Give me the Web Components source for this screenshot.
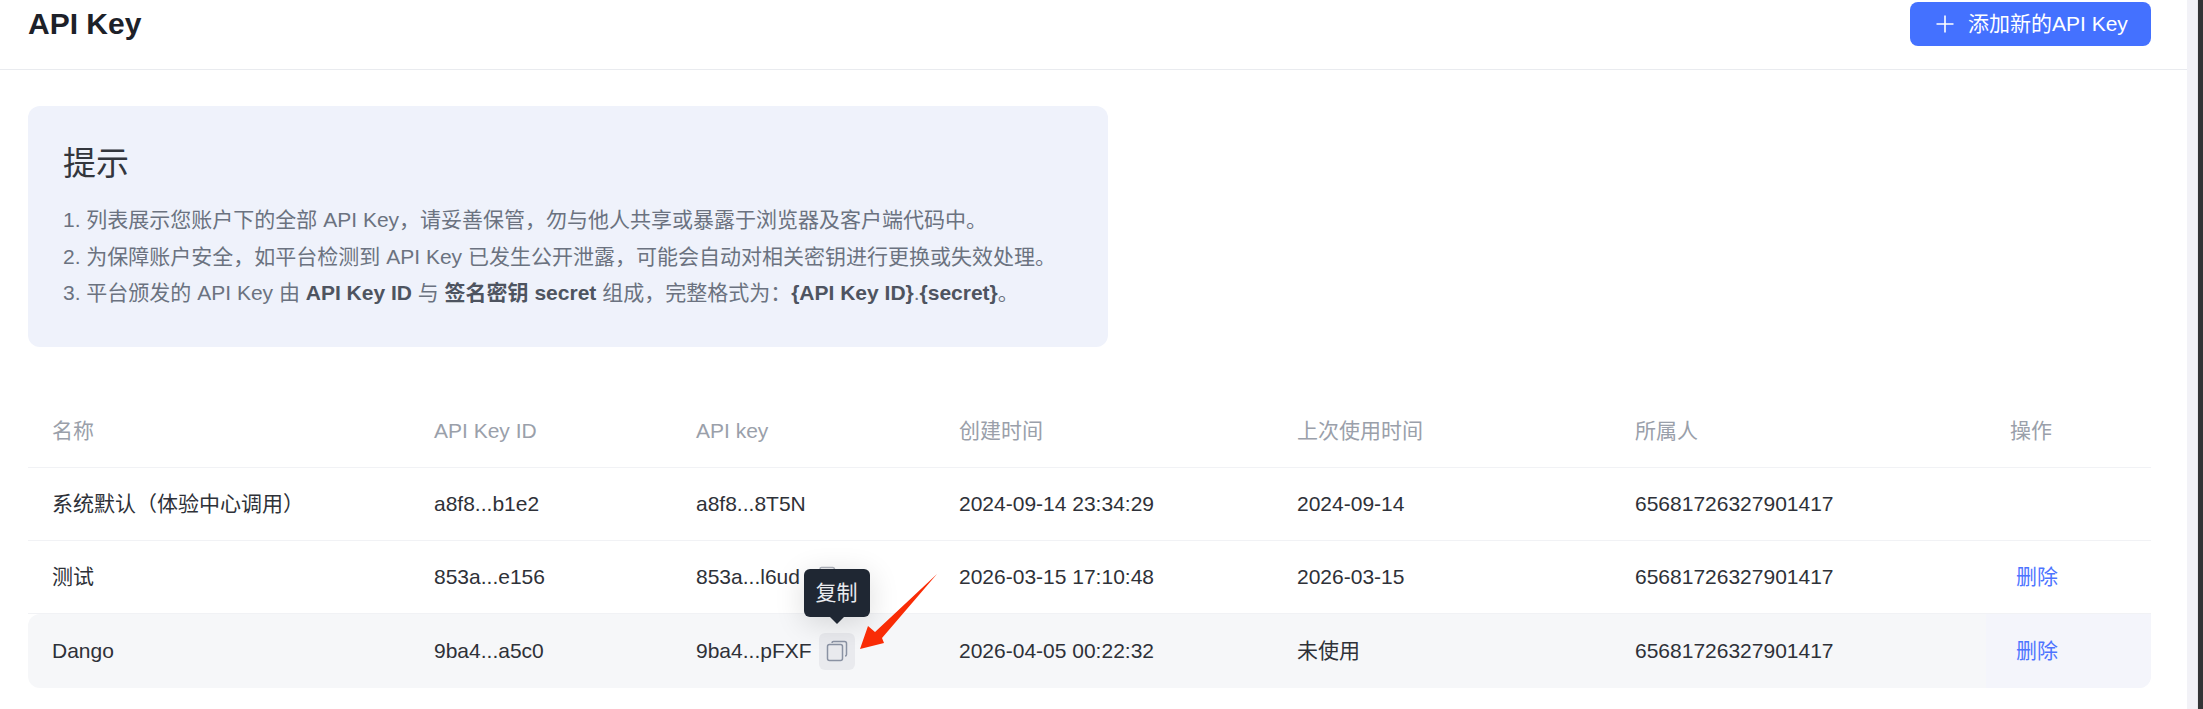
<!DOCTYPE html>
<html lang="zh">
<head>
<meta charset="utf-8">
<title>API Key</title>
<style>
  html, body { margin: 0; height: 100%; background: #fff; overflow: hidden; }
  body {
    display: flex;
    font-family: "Liberation Sans", "Noto Sans CJK SC", sans-serif;
  }
  tip-card b { color: #4e5460; }
</style>
</head>
<body>
<key-page>
  <page-header title-text="API Key" action="添加新的API Key"></page-header>
  <tip-card heading="提示">
    <li>列表展示您账户下的全部 API Key，请妥善保管，勿与他人共享或暴露于浏览器及客户端代码中。</li>
    <li>为保障账户安全，如平台检测到 API Key 已发生公开泄露，可能会自动对相关密钥进行更换或失效处理。</li>
    <li>平台颁发的 API Key 由 <b>API Key ID</b> 与 <b>签名密钥 secret</b> 组成，完整格式为：<b>{API Key ID}</b>.<b>{secret}</b>。</li>
  </tip-card>
  <key-table></key-table>
</key-page>
<window-edge></window-edge>

<script>
// Plain page column, takes whatever is left beside the scrollbar
class KeyPage extends HTMLElement {
  constructor() {
    super();
    this.attachShadow({ mode: 'open' });
    this.shadowRoot.innerHTML = `
      <style>
        :host { display: block; flex: 1; min-width: 0; }
      </style>
      <slot></slot>
    `;
  }
}

class PageHeader extends HTMLElement {
  constructor() {
    super();
    this.attachShadow({ mode: 'open' });
  }

  connectedCallback() {
    this.shadowRoot.innerHTML = `
      <style>
        :host {
          display: flex;
          align-items: flex-start;
          justify-content: space-between;
          height: 70px;
          padding: 2px 36px 0 28px;
          box-sizing: border-box;
          border-bottom: 1px solid #e9ebef;
        }
        h1 {
          margin: 0;
          font-size: 30px;
          line-height: 44px;
          font-weight: 700;
          color: #1d2129;
        }
        button {
          display: flex;
          align-items: center;
          gap: 14px;
          width: 241px;
          height: 44px;
          padding: 0 0 0 26px;
          box-sizing: border-box;
          border: 0;
          border-radius: 8px;
          background: #4471ff;
          color: #fff;
          font: 21px/28px "Liberation Sans", "Noto Sans CJK SC", sans-serif;
        }
        svg { width: 18px; height: 18px; flex: none; }
      </style>
      <h1>${this.getAttribute('title-text')}</h1>
      <button>
        <svg viewBox="0 0 18 18" fill="none" stroke="#fff" stroke-width="1.6"><path d="M9 0.5v17M0.5 9h17"/></svg>
        <span>${this.getAttribute('action')}</span>
      </button>
    `;
  }
}

class TipCard extends HTMLElement {
  constructor() {
    super();
    this.attachShadow({ mode: 'open' });
  }

  connectedCallback() {
    this.shadowRoot.innerHTML = `
      <style>
        :host {
          display: block;
          width: 1080px;
          height: 241px;
          margin: 36px 0 0 28px;
          padding: 38px 35px 0;
          box-sizing: border-box;
          border-radius: 12px;
          background: #eff2fb;
        }
        h2 {
          margin: 0 0 18px;
          font-size: 33px;
          line-height: 40px;
          font-weight: 400;
          color: #33363d;
        }
        ol {
          margin: 0;
          padding: 0;
        }
        ::slotted(li) {
          display: block;
          font-size: 21px;
          line-height: 36.5px;
          color: #6b7280;
          white-space: nowrap;
        }
      </style>
      <h2>${this.getAttribute('heading')}</h2>
      <ol><slot></slot></ol>
    `;
    // Numbers are written in since slotted li has no marker here
    [...this.children].forEach((li, i) => li.prepend(`${i + 1}. `));
  }
}

const COLUMNS = ['名称', 'API Key ID', 'API key', '创建时间', '上次使用时间', '所属人', '操作'];
const ROWS = [
  ['系统默认（体验中心调用）', 'a8f8...b1e2', 'a8f8...8T5N', '2024-09-14 23:34:29', '2024-09-14', '65681726327901417', ''],
  ['测试', '853a...e156', '853a...l6ud', '2026-03-15 17:10:48', '2026-03-15', '65681726327901417', '删除'],
  ['Dango', '9ba4...a5c0', '9ba4...pFXF', '2026-04-05 00:22:32', '未使用', '65681726327901417', '删除']
];

class KeyTable extends HTMLElement {
  constructor() {
    super();
    this.attachShadow({ mode: 'open' });
  }

  connectedCallback() {
    const head = COLUMNS.map(c => `<div class="cell">${c}</div>`).join('');
    const rows = ROWS.map((row, r) => `
      <div class="row ${r === 2 ? 'hover' : ''}">
        ${row.map((c, i) => `<div class="cell ${i === 6 ? 'link' : ''}">${c}${i === 2 && r > 0 ? this.copyButton(r === 2) : ''}</div>`).join('')}
      </div>`).join('');

    this.shadowRoot.innerHTML = `
      <style>
        :host {
          display: block;
          position: relative;
          width: 2123px;
          margin: 48px 0 0 28px;
          font-size: 21px;
          line-height: 28px;
          color: #2e3138;
        }
        .row {
          display: grid;
          grid-template-columns: 382px 262px 263px 338px 338px 375px 165px;
          align-items: center;
          height: 73px;
          border-bottom: 1px solid #f1f2f5;
          box-sizing: border-box;
        }
        .head { color: #9aa0aa; }
        .hover {
          height: 74px;
          background: #f6f7f9;
          border-radius: 12px 0 12px 12px;
          border-bottom: 0;
        }
        .cell { display: flex; align-items: center; gap: 7px; padding-left: 24px; white-space: nowrap; }
        .link { color: #4d74ff; padding-left: 30px; }
        .hover .link {
          align-self: stretch;
          background: #f4f5fb;
          border-radius: 0 0 12px 0;
        }
        .copy {
          display: flex;
          align-items: center;
          justify-content: center;
          width: 36px;
          height: 37px;
          border-radius: 6px;
          position: relative;
        }
        .copy.on { background: #e9eaee; }
        .copy svg { width: 22px; height: 22px; }
        .tooltip {
          position: absolute;
          left: -15px;
          bottom: 53px;
          width: 66px;
          height: 48px;
          display: flex;
          align-items: center;
          justify-content: center;
          border-radius: 6px;
          background: #1f2733;
          color: #e9ebef;
          font-size: 21px;
          box-shadow: 0 6px 30px rgba(0, 0, 0, .14);
        }
        .tooltip::after {
          content: '';
          position: absolute;
          left: 50%;
          bottom: -7px;
          margin-left: -7px;
          border: 7px solid transparent;
          border-bottom: 0;
          border-top-color: #1f2733;
        }
        .arrow {
          position: absolute;
          left: 832px;
          top: 175px;
          width: 80px;
          height: 82px;
          pointer-events: none;
        }
      </style>
      <div class="row head">${head}</div>
      ${rows}
      <svg class="arrow" viewBox="0 0 80 82"><path d="M0 79L8 56L15 62L77 4L22 68L24 73Z" fill="#f92c06"/></svg>
    `;
  }

  copyButton(active) {
    const tip = active ? `<span class="tooltip">复制</span>` : '';
    const stroke = active ? '#8a92a3' : '#b0b4bd';
    return `<span class="copy ${active ? 'on' : ''}">
      <svg viewBox="0 0 22 22" fill="none" stroke="${stroke}" stroke-width="1.5">
        <rect x="1.5" y="4.5" width="15" height="16" rx="2"/>
        <path d="M6 3A1.5 1.5 0 0 1 7.5 1.5H18.5a2 2 0 0 1 2 2v11a1.5 1.5 0 0 1-1.5 1.5"/>
      </svg>${tip}</span>`;
  }
}

// Scrollbar gutter and the dark sliver of the next window
class WindowEdge extends HTMLElement {
  constructor() {
    super();
    this.attachShadow({ mode: 'open' });
    this.shadowRoot.innerHTML = `
      <style>
        :host { display: flex; width: 16px; flex: none; }
        .gutter { flex: 1; background: #f2f2f7; border-right: 1px solid #e8e8ec; }
        .line { width: 5px; background: #333436; }
      </style>
      <div class="gutter"></div><div class="line"></div>
    `;
  }
}

customElements.define('key-page', KeyPage);
customElements.define('page-header', PageHeader);
customElements.define('tip-card', TipCard);
customElements.define('key-table', KeyTable);
customElements.define('window-edge', WindowEdge);
</script>
</body>
</html>
